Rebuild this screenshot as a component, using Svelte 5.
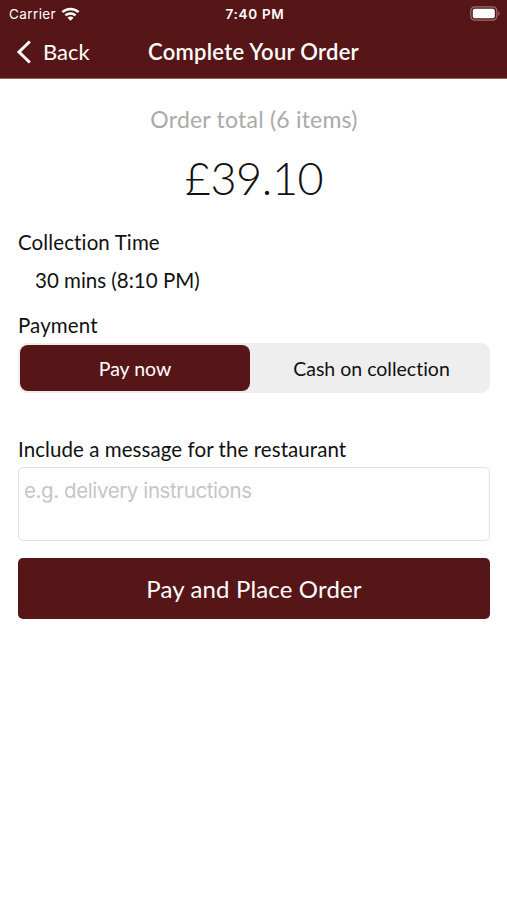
<script lang="ts">
  interface PaymentOption {
    id: string;
    label: string;
  }

  const paymentOptions: PaymentOption[] = [
    { id: 'card', label: 'Pay now' },
    { id: 'cash', label: 'Cash on collection' }
  ];

  let itemCount = 6;
  let total = 39.1;
  let collectionTime = '30 mins (8:10 PM)';
  let payment = 'card';
  let message = '';
</script>

<div class="screen">
  <header>
    <div class="status">
      <div class="carrier">
        <span>Carrier</span>
        <svg width="19" height="14" viewBox="0 0 18 14" fill="none" stroke="#fff" stroke-width="2.5">
          <path d="M.9 5.200C5.500 .8 12.500 .8 17.100 5.200" />
          <path d="M3.900 8.400C6.800 5.700 11.200 5.700 14.100 8.400" />
          <path d="M9 13.700L6 10.700C7.700 9.200 10.300 9.200 12 10.700Z" fill="#fff" stroke="none" />
        </svg>
      </div>
      <span class="clock">7:40 PM</span>
      <svg class="battery" width="31" height="15" viewBox="0 0 31 15">
        <rect x=".8" y=".8" width="26" height="13.400" rx="4" fill="none" stroke="#9a7071" stroke-width="1.200" />
        <rect x="2.800" y="2.800" width="22" height="9.400" rx="2" fill="#fff" />
        <path d="M28.300 5Q31 7.500 28.300 10Z" fill="#9a7071" />
      </svg>
    </div>
    <nav>
      <button class="back">
        <svg width="15" height="24" viewBox="0 0 15 24" fill="none" stroke="#fff" stroke-width="3">
          <path d="M13.800 1.500L3 12L13.800 22.500" />
        </svg>
        <span>Back</span>
      </button>
      <h1>Complete Your Order</h1>
    </nav>
  </header>

  <main>
    <p class="total-label">Order total ({itemCount} items)</p>
    <p class="total">£{total.toFixed(2)}</p>

    <h2>Collection Time</h2>
    <p class="time">{collectionTime}</p>

    <h2>Payment</h2>
    <div class="segments">
      {#each paymentOptions as option}
        <button class:selected={payment === option.id} on:click={() => (payment = option.id)}>
          {option.label}
        </button>
      {/each}
    </div>

    <label for="message">Include a message for the restaurant</label>
    <textarea id="message" placeholder="e.g. delivery instructions" bind:value={message}></textarea>

    <button class="submit">Pay and Place Order</button>
  </main>
</div>

<style>
  :global(body) {
    background: #fff;
  }

  .screen {
    font-family: Lato, sans-serif;
    font-variant-ligatures: none;
    color: #111;
    min-height: 900px;
  }

  h1, h2, p {
    margin: 0;
    font-weight: 400;
  }

  button {
    border: 0;
    padding: 0;
    background: none;
    font-family: inherit;
    font-variant-ligatures: none;
    color: inherit;
  }

  header {
    height: 79px;
    box-sizing: border-box;
    border-bottom: 1px solid #8f6261;
    background: #561617;
    color: #fff;
  }

  .status {
    display: grid;
    grid-template-columns: 1fr auto 1fr;
    align-items: center;
    height: 27px;
    padding: 0 6px 0 9px;
    font-family: Inter, sans-serif;
    font-size: 13.5px;
  }

  .carrier {
    display: flex;
    align-items: center;
    gap: 5px;
    letter-spacing: 0.4px;
  }

  .clock {
    font-weight: 600;
    letter-spacing: 0.7px;
  }

  .battery {
    justify-self: end;
    margin-bottom: 1px;
  }

  nav {
    display: grid;
    grid-template-columns: 1fr auto 1fr;
    align-items: center;
    height: 49px;
    padding: 0 16px;
  }

  .back {
    display: flex;
    align-items: center;
    gap: 12px;
    font-size: 22px;
  }

  h1 {
    font-size: 22px;
    font-weight: 600;
    letter-spacing: 0.27px;
  }

  main {
    display: flex;
    flex-direction: column;
    padding: 25px 17px 0 18px;
  }

  .total-label {
    text-align: center;
    font-size: 23px;
    line-height: 30px;
    letter-spacing: 0.22px;
    color: #aaa;
  }

  .total {
    margin-top: 14px;
    text-align: center;
    font-size: 45px;
    font-weight: 300;
    line-height: 60px;
    letter-spacing: -0.4px;
  }

  h2, .time, label {
    font-size: 20.5px;
    line-height: 26px;
  }

  h2 {
    margin-top: 19px;
    letter-spacing: 0.12px;
  }

  .total + h2 {
    margin-top: 21px;
  }

  .time {
    margin: 12px 0 0 17px;
  }

  .segments {
    display: grid;
    grid-template-columns: 230px 1fr;
    gap: 5px;
    height: 50px;
    margin-top: 5px;
    padding: 2px;
    box-sizing: border-box;
    border-radius: 9px;
    background: #eee;
  }

  .segments button {
    border-radius: 8px;
    font-size: 19.5px;
  }

  .segments .selected {
    background: #561617;
    color: #fff;
  }

  label {
    margin-top: 43px;
    letter-spacing: 0.07px;
  }

  textarea {
    height: 74px;
    margin: 5px 0 0;
    padding: 10px 5px;
    box-sizing: border-box;
    border: 1px solid #e3e3e3;
    border-radius: 5px;
    resize: none;
    font-family: Inter, sans-serif;
    font-size: 20.5px;
    letter-spacing: -0.4px;
  }

  textarea::placeholder {
    color: #c5c5c7;
  }

  .submit {
    height: 61px;
    margin-top: 17px;
    border-radius: 5px;
    background: #561617;
    color: #fff;
    font-size: 24px;
    letter-spacing: 0.15px;
  }
</style>
